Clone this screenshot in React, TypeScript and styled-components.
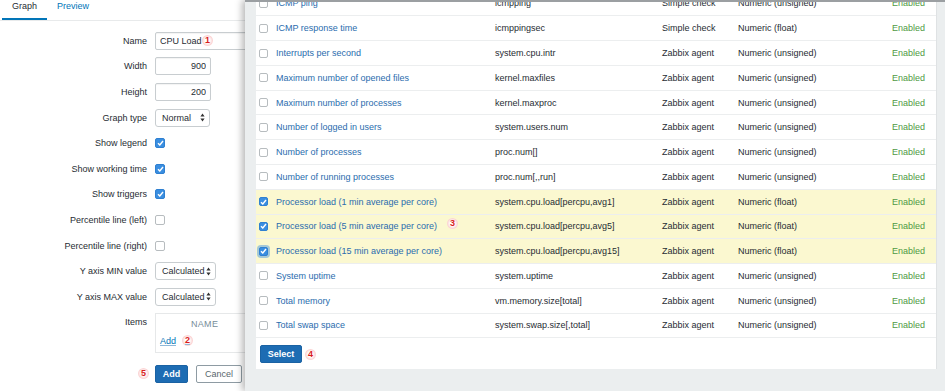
import React from 'react';
import styled, { createGlobalStyle } from 'styled-components';

const GlobalStyle = createGlobalStyle`
  html, body { margin: 0; padding: 0; background: #fff; }
  body {
    font-family: "Liberation Sans", Arial, Helvetica, sans-serif;
    font-size: 9px;
    color: #1f2c33;
  }
  * { box-sizing: border-box; }
`;

interface ItemInterface {
  name: string;
  key: string;
  type: string;
  valueType: string;
  selected?: boolean;
  focused?: boolean;
  badge?: string;
}

const items: ItemInterface[] = [
  { name: 'ICMP ping', key: 'icmpping', type: 'Simple check', valueType: 'Numeric (unsigned)' },
  { name: 'ICMP response time', key: 'icmppingsec', type: 'Simple check', valueType: 'Numeric (float)' },
  { name: 'Interrupts per second', key: 'system.cpu.intr', type: 'Zabbix agent', valueType: 'Numeric (unsigned)' },
  { name: 'Maximum number of opened files', key: 'kernel.maxfiles', type: 'Zabbix agent', valueType: 'Numeric (unsigned)' },
  { name: 'Maximum number of processes', key: 'kernel.maxproc', type: 'Zabbix agent', valueType: 'Numeric (unsigned)' },
  { name: 'Number of logged in users', key: 'system.users.num', type: 'Zabbix agent', valueType: 'Numeric (unsigned)' },
  { name: 'Number of processes', key: 'proc.num[]', type: 'Zabbix agent', valueType: 'Numeric (unsigned)' },
  { name: 'Number of running processes', key: 'proc.num[,,run]', type: 'Zabbix agent', valueType: 'Numeric (unsigned)' },
  { name: 'Processor load (1 min average per core)', key: 'system.cpu.load[percpu,avg1]', type: 'Zabbix agent', valueType: 'Numeric (float)', selected: true },
  { name: 'Processor load (5 min average per core)', key: 'system.cpu.load[percpu,avg5]', type: 'Zabbix agent', valueType: 'Numeric (float)', selected: true, badge: '3' },
  { name: 'Processor load (15 min average per core)', key: 'system.cpu.load[percpu,avg15]', type: 'Zabbix agent', valueType: 'Numeric (float)', selected: true, focused: true },
  { name: 'System uptime', key: 'system.uptime', type: 'Zabbix agent', valueType: 'Numeric (unsigned)' },
  { name: 'Total memory', key: 'vm.memory.size[total]', type: 'Zabbix agent', valueType: 'Numeric (unsigned)' },
  { name: 'Total swap space', key: 'system.swap.size[,total]', type: 'Zabbix agent', valueType: 'Numeric (unsigned)' }
];

const Page = styled.div`
  display: flex;
  width: 945px;
  height: 391px;
  overflow: hidden;
`;

/* left: graph form */

const FormPane = styled.div`
  width: 245px;
  flex: none;
  overflow: hidden;
  background: #fff;
`;

const Tabs = styled.div`
  display: flex;
  height: 21px;
  padding-left: 2px;
  border-bottom: 1px solid #e8eaeb;
`;

const Tab = styled.div<{ $active?: boolean }>`
  height: 20px;
  padding: 0 10px;
  line-height: 12px;
  color: ${(p): string => (p.$active ? '#1f2c33' : '#0275b8')};
  border-bottom: 2px solid ${(p): string => (p.$active ? '#0275b8' : 'transparent')};
`;

const Form = styled.div`
  padding-top: 7px;
`;

const FormRow = styled.div<{ $top?: boolean }>`
  display: grid;
  grid-template-columns: 147px 1fr;
  column-gap: 8px;
  align-items: ${(p): string => (p.$top ? 'start' : 'center')};
  min-height: 25.6px;
`;

const Label = styled.label<{ $pad?: number }>`
  text-align: right;
  white-space: nowrap;
  padding-top: ${(p): number => p.$pad || 0}px;
`;

const Field = styled.div`
  position: relative;
  display: flex;
  align-items: center;
`;

const TextInput = styled.input<{ $width: number; $right?: boolean }>`
  width: ${(p): number => p.$width}px;
  height: 18px;
  padding: 0 4px;
  border: 1px solid #c8cdd0;
  border-radius: 2px;
  background: #fff;
  color: #1f2c33;
  font: inherit;
  font-size: 9px;
  text-align: ${(p): string => (p.$right ? 'right' : 'left')};
  box-shadow: inset 0 1px 1px rgba(0, 0, 0, 0.05);
  outline: none;
`;

const SelectBox = styled.div<{ $width: number }>`
  display: flex;
  align-items: center;
  justify-content: space-between;
  width: ${(p): number => p.$width}px;
  height: 18px;
  padding: 0 4px 0 6px;
  border: 1px solid #c8cdd0;
  border-radius: 3px;
  background: #fff;
`;

const Check = styled.span<{ $checked?: boolean; $focused?: boolean; $size: number }>`
  display: inline-flex;
  align-items: center;
  justify-content: center;
  width: ${(p): number => p.$size}px;
  height: ${(p): number => p.$size}px;
  border-radius: 2px;
  border: 1px solid ${(p): string => (p.$checked ? '#2f80d1' : '#b7bcbf')};
  background: ${(p): string => (p.$checked ? '#3a8ee0' : '#fff')};
  box-shadow: ${(p): string => (p.$focused ? '0 0 0 2px rgba(58, 142, 224, 0.45)' : 'none')};
`;

const ItemsBox = styled.div`
  width: 120px;
  height: 40px;
  margin-top: 3px;
  padding: 4px 4px 0;
  border: 1px solid #e6e8e9;
`;

const ItemsHead = styled.div`
  line-height: 12px;
  padding-left: 31px;
  color: #768d99;
  letter-spacing: 0.3px;
`;

const AddLink = styled.span`
  display: inline-flex;
  align-items: center;
  margin-top: 5px;
  line-height: 12px;
  color: #0275b8;
  text-decoration: underline;
  text-decoration-color: #8fb8d8;
`;

const Buttons = styled.div`
  display: flex;
  gap: 8px;
  margin-top: 12px;
`;

const ButtonRow = styled.div`
  display: grid;
  grid-template-columns: 147px 1fr;
  column-gap: 8px;
  align-items: center;
`;

const BadgeCell = styled.div`
  display: flex;
  justify-content: flex-end;
  margin-top: 12px;
  margin-right: -2px;
`;

const Button = styled.button<{ $secondary?: boolean; $width: number }>`
  width: ${(p): number => p.$width}px;
  height: 18px;
  padding: 0;
  border-radius: 2px;
  font: inherit;
  font-size: 9px;
  font-weight: ${(p): string => (p.$secondary ? 'normal' : 'bold')};
  color: ${(p): string => (p.$secondary ? '#59666d' : '#fff')};
  background: ${(p): string => (p.$secondary ? '#fff' : '#1d6cb3')};
  border: 1px solid ${(p): string => (p.$secondary ? '#8e9ba3' : '#1a62a3')};
`;

const Badge = styled.span<{ $gap?: number; $lift?: number }>`
  display: inline-flex;
  align-items: center;
  justify-content: center;
  width: 11px;
  height: 11px;
  margin-left: ${(p): number => p.$gap || 0}px;
  position: relative;
  top: ${(p): number => -(p.$lift || 0)}px;
  border-radius: 50%;
  background: radial-gradient(circle, #fff 0 30%, #fbd4d4 65%, rgba(255, 255, 255, 0) 100%);
  color: #d91c1c;
  font-weight: bold;
  font-size: 9px;
  line-height: 1;
`;

const NameBadge = styled(Badge)`
  position: absolute;
  left: 47px;
  top: 3.5px;
`;

/* right: item picker */

const Modal = styled.div`
  position: relative;
  z-index: 1;
  flex: 1;
  overflow: hidden;
  padding: 0 8px 0 11px;
  background: #ebeeef;
  border-top: 2px solid #9b9fa2;
  box-shadow: -3px 0 7px rgba(0, 0, 0, 0.28);
`;

const Panel = styled.div`
  margin-top: -10.4px;
  padding-bottom: 6px;
  background: #fff;
  border-right: 1px solid #dfe2e4;
`;

const ItemRow = styled.div<{ $selected?: boolean }>`
  display: grid;
  grid-template-columns: 17px 219px 167px 76px 1fr auto;
  align-items: center;
  height: 24.77px;
  padding: 0 11px 0 3px;
  border-bottom: 1px solid #eceeef;
  background: ${(p): string => (p.$selected ? '#fbf8d0' : '#fff')};
  white-space: nowrap;
`;

const ItemName = styled.span`
  display: flex;
  align-items: center;
  color: #2a6cae;
`;

const Status = styled.span`
  color: #4f9a43;
`;

const PanelFooter = styled.div`
  display: flex;
  align-items: center;
  gap: 3px;
  padding: 7px 0 0 4px;
`;

const Tick: React.FC = () => (
  <svg width="7" height="6" viewBox="0 0 7 6">
    <path d="M1 3.2 L2.8 5 L6 1" fill="none" stroke="#fff" strokeWidth="1.4" />
  </svg>
);

const UpDown: React.FC = () => (
  <svg width="5" height="9" viewBox="0 0 5 9">
    <path d="M2.5 0.5 L4.6 3.6 H0.4 Z M2.5 8.5 L4.6 5.4 H0.4 Z" fill="#333" />
  </svg>
);

const Checkbox: React.FC<{ checked?: boolean; focused?: boolean; size: number }> = (
  { checked, focused, size }
) => (
  <Check $checked={checked} $focused={focused} $size={size}>
    {checked && <Tick />}
  </Check>
);

const GraphForm: React.FC = () => (
  <FormPane>
    <Tabs>
      <Tab $active>Graph</Tab>
      <Tab>Preview</Tab>
    </Tabs>
    <Form>
      <FormRow>
        <Label>Name</Label>
        <Field>
          <TextInput $width={120} readOnly value="CPU Load" />
          <NameBadge>1</NameBadge>
        </Field>
      </FormRow>
      <FormRow>
        <Label>Width</Label>
        <Field><TextInput $width={56} $right readOnly value="900" /></Field>
      </FormRow>
      <FormRow>
        <Label>Height</Label>
        <Field><TextInput $width={56} $right readOnly value="200" /></Field>
      </FormRow>
      <FormRow>
        <Label>Graph type</Label>
        <Field><SelectBox $width={55}>Normal<UpDown /></SelectBox></Field>
      </FormRow>
      <FormRow>
        <Label>Show legend</Label>
        <Field><Checkbox checked size={10} /></Field>
      </FormRow>
      <FormRow>
        <Label>Show working time</Label>
        <Field><Checkbox checked size={10} /></Field>
      </FormRow>
      <FormRow>
        <Label>Show triggers</Label>
        <Field><Checkbox checked size={10} /></Field>
      </FormRow>
      <FormRow>
        <Label>Percentile line (left)</Label>
        <Field><Checkbox size={10} /></Field>
      </FormRow>
      <FormRow>
        <Label>Percentile line (right)</Label>
        <Field><Checkbox size={10} /></Field>
      </FormRow>
      <FormRow>
        <Label>Y axis MIN value</Label>
        <Field><SelectBox $width={61}>Calculated<UpDown /></SelectBox></Field>
      </FormRow>
      <FormRow>
        <Label>Y axis MAX value</Label>
        <Field><SelectBox $width={61}>Calculated<UpDown /></SelectBox></Field>
      </FormRow>
      <FormRow $top>
        <Label $pad={7}>Items</Label>
        <ItemsBox>
          <ItemsHead>NAME</ItemsHead>
          <AddLink>Add<Badge $gap={6}>2</Badge></AddLink>
        </ItemsBox>
      </FormRow>
      <ButtonRow>
        <BadgeCell><Badge>5</Badge></BadgeCell>
        <Buttons>
          <Button $width={33}>Add</Button>
          <Button $width={46} $secondary>Cancel</Button>
        </Buttons>
      </ButtonRow>
    </Form>
  </FormPane>
);

const ItemPicker: React.FC = () => (
  <Modal>
    <Panel>
      {items.map((item) => (
        <ItemRow key={item.key} $selected={item.selected}>
          <Checkbox checked={item.selected} focused={item.focused} size={9} />
          <ItemName>
            {item.name}
            {item.badge && <Badge $gap={10} $lift={3}>{item.badge}</Badge>}
          </ItemName>
          <span>{item.key}</span>
          <span>{item.type}</span>
          <span>{item.valueType}</span>
          <Status>Enabled</Status>
        </ItemRow>
      ))}
      <PanelFooter>
        <Button $width={42}>Select</Button>
        <Badge>4</Badge>
      </PanelFooter>
    </Panel>
  </Modal>
);

const App: React.FC = () => (
  <>
    <GlobalStyle />
    <Page>
      <GraphForm />
      <ItemPicker />
    </Page>
  </>
);

export default App;
